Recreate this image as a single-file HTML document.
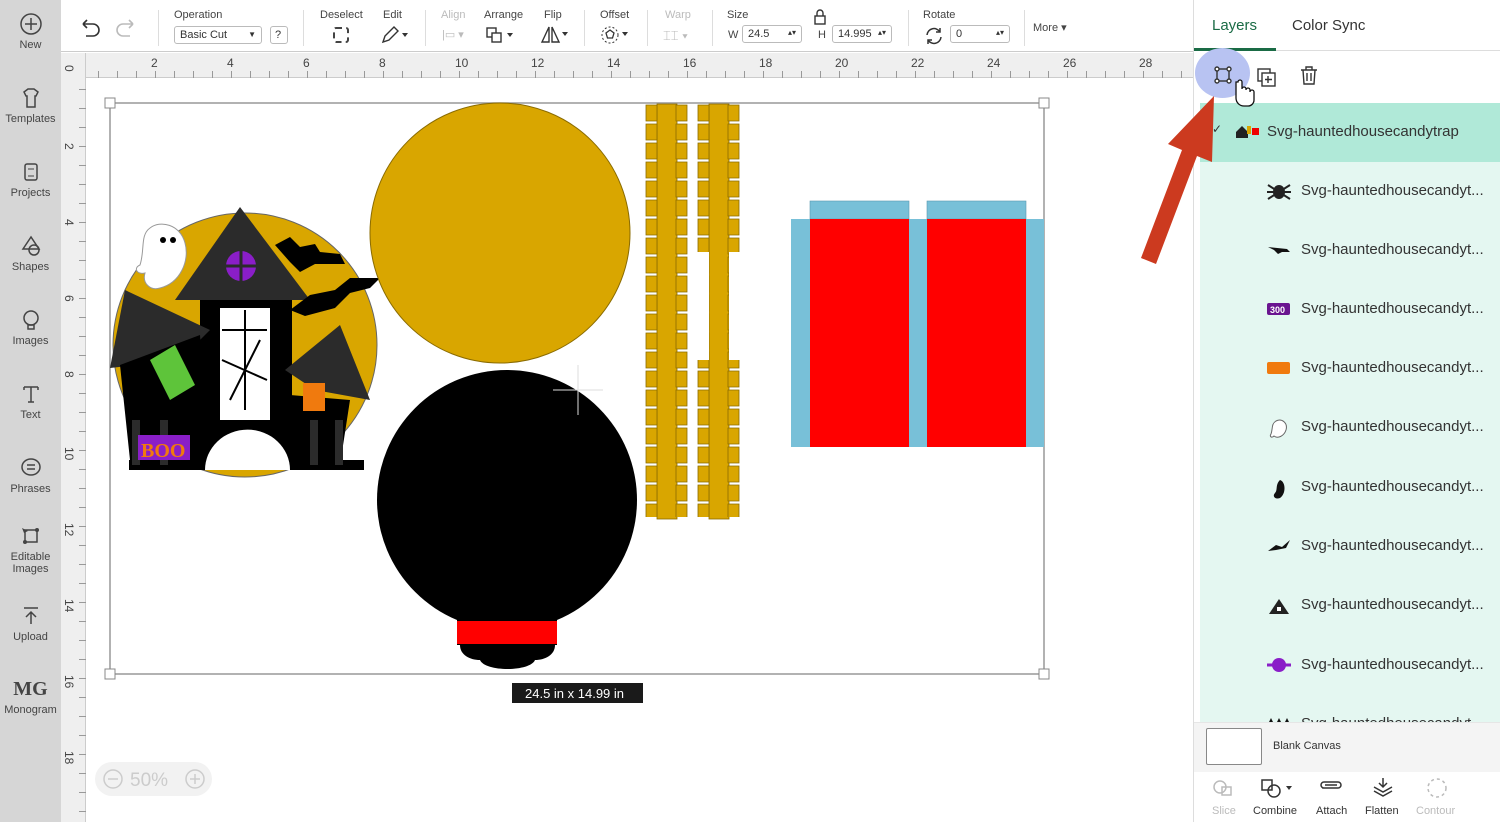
<!DOCTYPE html>
<html><head><meta charset="utf-8"><style>
*{margin:0;padding:0;box-sizing:border-box}
body{width:1500px;height:822px;overflow:hidden;background:#fff;font-family:"Liberation Sans",sans-serif;position:relative;color:#333}
.a{position:absolute}
.side{left:0;top:0;width:61px;height:822px;background:#d6d6d6}
.si{position:absolute;left:0;width:61px;text-align:center;font-size:11px;color:#444}
.tb{left:61px;top:0;width:1132px;height:52px;background:#fff;border-bottom:1px solid #ccc}
.lbl{position:absolute;font-size:11px;color:#444}
.dim{color:#bbb}
.inp{position:absolute;border:1px solid #bbb;border-radius:3px;height:18px;font-size:11px;padding:2px 5px;background:#fff}
.vs{position:absolute;left:1193px;top:0;width:1px;height:822px;background:#ddd}
.row{position:absolute;left:1200px;width:300px;height:59px;font-size:15px;color:#333}
.row span{position:absolute;left:101px;top:20px}
.ic{position:absolute;left:66px;top:20px;width:26px;height:18px}
.bt{position:absolute;top:805px;font-size:11px;color:#333;text-align:center}
</style></head><body>
<div class="a side"></div>
<div class="si" style="top:12px"><svg width="24" height="24"><circle cx="12" cy="12" r="10" fill="none" stroke="#444" stroke-width="1.5"/><path d="M12 6v12M6 12h12" stroke="#444" stroke-width="1.5"/></svg><div>New</div></div>
<div class="si" style="top:86px"><svg width="24" height="24"><path d="M5 6l4-3h6l4 3-2 4h-1v11H8V10H7z" fill="none" stroke="#444" stroke-width="1.5"/></svg><div>Templates</div></div>
<div class="si" style="top:160px"><svg width="24" height="24"><rect x="6" y="4" width="12" height="16" rx="2" fill="none" stroke="#444" stroke-width="1.5"/><path d="M9 9h6M9 16h6" stroke="#444"/></svg><div>Projects</div></div>
<div class="si" style="top:234px"><svg width="24" height="24"><path d="M12 3L4 15h16z" fill="none" stroke="#444" stroke-width="1.5"/><circle cx="15" cy="16" r="5" fill="none" stroke="#444" stroke-width="1.5"/></svg><div>Shapes</div></div>
<div class="si" style="top:308px"><svg width="24" height="24"><circle cx="12" cy="10" r="7" fill="none" stroke="#444" stroke-width="1.5"/><path d="M9 17h6v4H9z" fill="none" stroke="#444" stroke-width="1.5"/></svg><div>Images</div></div>
<div class="si" style="top:382px"><svg width="24" height="24"><path d="M5 5h14M12 5v15M9 20h6M5 5v3M19 5v3" stroke="#444" stroke-width="1.5" fill="none"/></svg><div>Text</div></div>
<div class="si" style="top:456px"><svg width="24" height="24"><ellipse cx="12" cy="11" rx="9" ry="8" fill="none" stroke="#444" stroke-width="1.5"/><path d="M8 9h8M8 13h8" stroke="#444" stroke-width="1.5"/></svg><div>Phrases</div></div>
<div class="si" style="top:524px"><svg width="24" height="24"><path d="M6 6h12v12H6z" fill="none" stroke="#444" stroke-width="1.5"/><circle cx="6" cy="18" r="2" fill="#444"/><circle cx="18" cy="6" r="2" fill="#444"/><path d="M3 4l6 3-4 2z" fill="#444"/></svg><div>Editable<br>Images</div></div>
<div class="si" style="top:604px"><svg width="24" height="24"><path d="M5 4h14M12 20V8M7 13l5-5 5 5" stroke="#444" stroke-width="1.5" fill="none"/></svg><div>Upload</div></div>
<div class="si" style="top:678px"><div style="font-size:20px;font-weight:bold;color:#444;font-family:'Liberation Serif',serif;height:26px">MG</div><div>Monogram</div></div>

<div class="a tb"></div>
<svg class="a" style="left:78px;top:16px" width="60" height="24"><path d="M5 8h10a6 6 0 0 1 0 12H8M5 8l4-4M5 8l4 4" stroke="#333" stroke-width="1.6" fill="none"/><path d="M55 8H45a6 6 0 0 0 0 12h7M55 8l-4-4M55 8l-4 4" stroke="#bbb" stroke-width="1.6" fill="none"/></svg>
<div class="a" style="left:158px;top:10px;width:1px;height:36px;background:#ddd"></div>
<div class="lbl" style="left:174px;top:9px">Operation</div>
<div class="inp" style="left:174px;top:26px;width:88px">Basic Cut<span style="float:right;font-size:8px;margin-top:1px">▼</span></div>
<div class="inp" style="left:270px;top:26px;width:18px;padding:2px 4px">?</div>
<div class="a" style="left:303px;top:10px;width:1px;height:36px;background:#ddd"></div>
<div class="lbl" style="left:320px;top:9px">Deselect</div>
<div class="a" style="left:333px;top:27px;width:16px;height:16px;border:2px dashed #444;border-radius:3px"></div>
<div class="lbl" style="left:383px;top:9px">Edit</div>
<svg class="a" style="left:380px;top:26px" width="30" height="18"><path d="M3 16l2-6 9-9 4 4-9 9z" fill="none" stroke="#333" stroke-width="1.4"/><path d="M22 7h6l-3 4z" fill="#333"/></svg>
<div class="a" style="left:425px;top:10px;width:1px;height:36px;background:#ddd"></div>
<div class="lbl dim" style="left:441px;top:9px">Align</div>
<div class="lbl dim" style="left:442px;top:28px">|▭ ▾</div>
<div class="lbl" style="left:484px;top:9px">Arrange</div>
<svg class="a" style="left:486px;top:26px" width="30" height="18"><rect x="1" y="2" width="9" height="9" fill="none" stroke="#333" stroke-width="1.4"/><rect x="6" y="7" width="9" height="9" fill="#fff" stroke="#333" stroke-width="1.4"/><path d="M21 7h6l-3 4z" fill="#333"/></svg>
<div class="lbl" style="left:544px;top:9px">Flip</div>
<svg class="a" style="left:540px;top:25px" width="30" height="20"><path d="M9 2L2 17h7zM12 2l7 15h-7z" fill="none" stroke="#333" stroke-width="1.4"/><path d="M22 7h6l-3 4z" fill="#333"/></svg>
<div class="a" style="left:584px;top:10px;width:1px;height:36px;background:#ddd"></div>
<div class="lbl" style="left:600px;top:9px">Offset</div>
<svg class="a" style="left:600px;top:25px" width="32" height="20"><circle cx="10" cy="10" r="8" fill="none" stroke="#333" stroke-dasharray="2 2"/><path d="M10 5l4 3-1.5 5h-5L6 8z" fill="none" stroke="#333" stroke-width="1.3"/><path d="M22 7h6l-3 4z" fill="#333"/></svg>
<div class="a" style="left:647px;top:10px;width:1px;height:36px;background:#ddd"></div>
<div class="lbl dim" style="left:665px;top:9px">Warp</div>
<div class="lbl dim" style="left:663px;top:28px;font-size:13px">⌶⌶ ▾</div>
<div class="a" style="left:712px;top:10px;width:1px;height:36px;background:#ddd"></div>
<div class="lbl" style="left:727px;top:9px">Size</div>
<div class="lbl" style="left:728px;top:29px">W</div>
<div class="inp" style="left:742px;top:25px;width:60px">24.5<span style="float:right;font-size:8px">▴▾</span></div>
<svg class="a" style="left:812px;top:9px" width="16" height="16"><rect x="3" y="7" width="10" height="8" fill="none" stroke="#333" stroke-width="1.4"/><path d="M5 7V4a3 3 0 0 1 6 0v3" fill="none" stroke="#333" stroke-width="1.4"/></svg>
<div class="lbl" style="left:818px;top:29px">H</div>
<div class="inp" style="left:832px;top:25px;width:60px">14.995<span style="float:right;font-size:8px">▴▾</span></div>
<div class="a" style="left:908px;top:10px;width:1px;height:36px;background:#ddd"></div>
<div class="lbl" style="left:923px;top:9px">Rotate</div>
<svg class="a" style="left:924px;top:26px" width="20" height="20"><path d="M3 9a7 7 0 0 1 13-3M17 11a7 7 0 0 1-13 3" fill="none" stroke="#333" stroke-width="1.5"/><path d="M16 2v4h-4M4 18v-4h4" fill="none" stroke="#333" stroke-width="1.5"/></svg>
<div class="inp" style="left:950px;top:25px;width:60px">0<span style="float:right;font-size:8px">▴▾</span></div>
<div class="a" style="left:1024px;top:10px;width:1px;height:36px;background:#ddd"></div>
<div class="lbl" style="left:1033px;top:21px">More ▾</div>

<div class="a" style="left:61px;top:53px;width:1132px;height:25px;background:#efefef;border-bottom:1px solid #ccc"></div>
<div class="a" style="left:61px;top:53px;width:25px;height:769px;background:#efefef;border-right:1px solid #ccc"></div>
<svg class="a" style="left:61px;top:53px" width="1132" height="769">
<defs><pattern id="hp" x="18" y="0" width="19" height="25" patternUnits="userSpaceOnUse"><path d="M0.5 18v7" stroke="#999"/></pattern>
<pattern id="vp" x="0" y="17" width="25" height="19" patternUnits="userSpaceOnUse"><path d="M18 0.5h7" stroke="#999"/></pattern></defs>
<rect x="25" y="0" width="1107" height="25" fill="url(#hp)"/>
<rect x="0" y="25" width="25" height="744" fill="url(#vp)"/>
<g font-size="12" fill="#444" font-family="Liberation Sans">
<text x="90" y="14">2</text><text x="166" y="14">4</text><text x="242" y="14">6</text><text x="318" y="14">8</text><text x="394" y="14">10</text><text x="470" y="14">12</text><text x="546" y="14">14</text><text x="622" y="14">16</text><text x="698" y="14">18</text><text x="774" y="14">20</text><text x="850" y="14">22</text><text x="926" y="14">24</text><text x="1002" y="14">26</text><text x="1078" y="14">28</text>
<g transform="rotate(90)"><text x="12" y="-4">0</text><text x="90" y="-4">2</text><text x="166" y="-4">4</text><text x="242" y="-4">6</text><text x="318" y="-4">8</text><text x="394" y="-4">10</text><text x="470" y="-4">12</text><text x="546" y="-4">14</text><text x="622" y="-4">16</text><text x="698" y="-4">18</text></g>
</g></svg>

<svg class="a" style="left:0;top:0" width="1193" height="822">
<defs><pattern id="tab" x="0" y="104" width="43" height="19" patternUnits="userSpaceOnUse"><path d="M1 1h11v16H1zM31 1h11v16H31z" fill="#d9a600" stroke="#8a6b00" stroke-width="0.8"/></pattern></defs>
<rect x="110" y="103" width="934" height="571" fill="none" stroke="#999" stroke-width="1.5"/>
<g fill="#fff" stroke="#888"><rect x="105" y="98" width="10" height="10"/><rect x="1039" y="98" width="10" height="10"/><rect x="105" y="669" width="10" height="10"/><rect x="1039" y="669" width="10" height="10"/></g>
<circle cx="245" cy="345" r="132" fill="#d9a600" stroke="#666"/>
<path d="M129 470h235v-10H129z" fill="#000"/>
<path d="M200 300h92v170h-92z" fill="#000"/>
<rect x="220" y="308" width="50" height="112" fill="#fff"/>
<path d="M222 330l45 0M222 360l45 20M245 310l0 100M230 400l30-60" stroke="#000" stroke-width="2"/>
<path d="M175 300L240 207 310 300z" fill="#2b2b2b"/>
<circle cx="241" cy="266" r="15" fill="#8a1ec8"/><path d="M241 251v30M226 266h30" stroke="#2b2b2b" stroke-width="3"/>
<path d="M125 290L210 330l-30 30-70 8z" fill="#2b2b2b"/>
<path d="M120 365l80-30 10 130-80-5z" fill="#000"/>
<path d="M150 360l25-15 20 40-25 15z" fill="#5ec43a"/>
<path d="M285 370l55-45 30 75-55-10z" fill="#2b2b2b"/>
<path d="M290 395l60 5-10 65-55 0z" fill="#000"/>
<rect x="303" y="383" width="22" height="28" fill="#f07a0e"/>
<path d="M205 470a40 38 0 0 1 85 0z" fill="#fff"/>
<path d="M150 228c10-8 30-4 35 15 5 18-5 40-25 45-10 3-18-5-15-15-8 2-12-5-5-8 5-15 0-30 10-37z" fill="#fff" stroke="#999"/>
<circle cx="163" cy="240" r="3" fill="#000"/><circle cx="173" cy="240" r="3" fill="#000"/>
<path d="M275 245l15-8 10 10 15-3 5 8 20 2 5 10-30 0-15 8-10-10z" fill="#000"/>
<path d="M290 310l20-15 25-5 15-12 30 0-10 10-20 5-15 15-30 8z" fill="#000"/>
<path d="M132 420h8v45h-8zM160 420h8v45h-8zM310 420h8v45h-8zM335 420h8v45h-8z" fill="#2b2b2b"/>
<rect x="138" y="435" width="52" height="25" fill="#8a1ec8"/><text x="141" y="457" font-size="20" fill="#f07a0e" font-family="Liberation Serif" font-weight="bold">BOO</text>
<circle cx="500" cy="233" r="130" fill="#d9a600" stroke="#8a6b00"/>
<rect x="657" y="104" width="20" height="415" fill="#d9a600" stroke="#8a6b00" stroke-width="0.8"/>
<rect x="645" y="104" width="43" height="413" fill="url(#tab)"/>
<g transform="translate(52,0)"><rect x="657" y="104" width="20" height="415" fill="#d9a600" stroke="#8a6b00" stroke-width="0.8"/>
<rect x="645" y="104" width="43" height="413" fill="url(#tab)"/></g>
<rect x="697" y="252" width="12" height="108" fill="#fff"/><rect x="729" y="252" width="12" height="108" fill="#fff"/>
<circle cx="507" cy="500" r="130" fill="#000"/>
<rect x="457" y="600" width="100" height="45" fill="#000"/>
<path d="M460 645h95c0 10-10 15-20 15-5 12-50 12-55 0-10 0-20-5-20-15z" fill="#000"/>
<rect x="457" y="621" width="100" height="23" fill="#ff0000"/>
<path d="M578 365v50M553 390h50" stroke="#ddd"/>
<rect x="791" y="219" width="253" height="228" fill="#78c0d8"/>
<rect x="810" y="201" width="99" height="18" fill="#78c0d8" stroke="#5a9ab0" stroke-width="0.6"/>
<rect x="927" y="201" width="99" height="18" fill="#78c0d8" stroke="#5a9ab0" stroke-width="0.6"/>
<rect x="810" y="219" width="99" height="228" fill="#ff0000"/>
<rect x="927" y="219" width="99" height="228" fill="#ff0000"/>
<rect x="512" y="683" width="131" height="20" fill="#1a1a1a"/>
<text x="525" y="698" font-size="13" fill="#fff" font-family="Liberation Sans">24.5  in x 14.99  in</text>
<rect x="95" y="762" width="117" height="34" rx="17" fill="#f2f2f2"/>
<circle cx="113" cy="779" r="9" fill="none" stroke="#ccc" stroke-width="1.5"/><path d="M108 779h10" stroke="#ccc" stroke-width="1.5"/>
<text x="130" y="786" font-size="19" fill="#ccc" font-family="Liberation Sans">50%</text>
<circle cx="195" cy="779" r="9" fill="none" stroke="#ccc" stroke-width="1.5"/><path d="M190 779h10M195 774v10" stroke="#ccc" stroke-width="1.5"/>
</svg>

<div class="vs"></div>
<div class="a" style="left:1212px;top:17px;font-size:15px;color:#1a6b45">Layers</div>
<div class="a" style="left:1292px;top:17px;font-size:15px;color:#333">Color Sync</div>
<div class="a" style="left:1194px;top:48px;width:82px;height:3px;background:#1a6b45"></div>
<div class="a" style="left:1276px;top:50px;width:224px;height:1px;background:#ddd"></div>
<div class="a" style="left:1200px;top:103px;width:300px;height:620px;background:#e4f7f1"></div>
<div class="a" style="left:1200px;top:103px;width:300px;height:59px;background:#b0e9d8"></div>
<div class="row" style="top:103px"><span style="left:12px;top:19px;font-size:12px">✓</span><div class="ic" style="left:34px;top:19px"><svg width="26" height="18"><path d="M2 10l6-6 6 6v6H2z" fill="#222"/><rect x="13" y="4" width="4" height="8" fill="#d9a600"/><rect x="18" y="6" width="7" height="7" fill="#e00"/></svg></div><span style="left:67px">Svg-hauntedhousecandytrap</span></div>
<div class="row" style="top:162px"><div class="ic"><svg width="26" height="20"><ellipse cx="13" cy="10" rx="6" ry="7" fill="#222"/><path d="M2 3l22 14M2 17L24 3M1 10h24" stroke="#222" stroke-width="2"/></svg></div><span>Svg-hauntedhousecandyt...</span></div>
<div class="row" style="top:221px"><div class="ic"><svg width="26" height="18"><path d="M2 6l6 3 4 4 4-2 8 0-3-3z" fill="#111"/></svg></div><span>Svg-hauntedhousecandyt...</span></div>
<div class="row" style="top:280px"><div class="ic"><svg width="26" height="18"><rect x="1" y="3" width="23" height="12" rx="2" fill="#6a1590"/><text x="4" y="13" font-size="9" fill="#fff" font-weight="bold">300</text></svg></div><span>Svg-hauntedhousecandyt...</span></div>
<div class="row" style="top:339px"><div class="ic"><svg width="26" height="18"><rect x="1" y="3" width="23" height="12" rx="2" fill="#f07a0e"/></svg></div><span>Svg-hauntedhousecandyt...</span></div>
<div class="row" style="top:398px"><div class="ic"><svg width="26" height="22"><path d="M10 3c6-3 12 2 10 9-2 6-8 9-12 6-2 2-5 1-3-2 2-5 0-10 5-13z" fill="#fff" stroke="#666"/></svg></div><span>Svg-hauntedhousecandyt...</span></div>
<div class="row" style="top:458px"><div class="ic"><svg width="26" height="22"><path d="M14 2c6 2 6 14 0 18-5 2-8-2-5-5 3-3 0-8 5-13z" fill="#111"/></svg></div><span>Svg-hauntedhousecandyt...</span></div>
<div class="row" style="top:517px"><div class="ic"><svg width="26" height="18"><path d="M2 14l8-6 6 2 8-7-4 8-10 2z" fill="#111"/></svg></div><span>Svg-hauntedhousecandyt...</span></div>
<div class="row" style="top:576px"><div class="ic"><svg width="26" height="20"><path d="M13 3L3 18h20z" fill="#222"/><rect x="11" y="11" width="4" height="4" fill="#fff"/></svg></div><span>Svg-hauntedhousecandyt...</span></div>
<div class="row" style="top:636px"><div class="ic"><svg width="26" height="18"><circle cx="13" cy="9" r="7" fill="#8a1ec8"/><path d="M1 9h24" stroke="#8a1ec8" stroke-width="3"/></svg></div><span>Svg-hauntedhousecandyt...</span></div>
<div class="row" style="top:695px;height:28px;overflow:hidden"><div class="ic" style="top:18px"><svg width="26" height="10"><path d="M2 8l3-6 3 6zM10 8l3-6 3 6zM18 8l3-6 3 6z" fill="#111"/></svg></div><span style="top:20px">Svg-hauntedhousecandyt...</span></div>
<div class="a" style="left:1195px;top:48px;width:55px;height:50px;border-radius:50%;background:#b8c3f2"></div>
<svg class="a" style="left:1212px;top:64px" width="110" height="50"><g fill="none" stroke="#333" stroke-width="1.4"><rect x="5" y="5" width="12" height="12"/><circle cx="5" cy="5" r="2" fill="#fff"/><circle cx="17" cy="5" r="2" fill="#fff"/><circle cx="5" cy="17" r="2" fill="#fff"/><circle cx="17" cy="17" r="2" fill="#fff"/>
<rect x="46" y="5" width="12" height="12"/><rect x="50" y="9" width="13" height="13" fill="#fff"/><path d="M56 12v7M53 15.5h7"/>
<path d="M89 6h16M94 6V3h6v3M91 6l1 14h10l1-14M95 9v8M99 9v8"/></g>
<path d="M24 18v16a8 8 0 0 0 8 8h4a6 6 0 0 0 6-6v-8a2 2 0 0 0-4 0v-2a2 2 0 0 0-4 0v-1a2 2 0 0 0-4 0v-7a2 2 0 0 0-4 0z" fill="#fff" stroke="#111" stroke-width="1.3"/></svg>
<svg class="a" style="left:0;top:0;pointer-events:none" width="1500" height="822"><path d="M1141 258L1182 150 1168 144 1214 96 1212 162 1197 156 1156 264z" fill="#cc3a1f"/></svg>
<div class="a" style="left:1194px;top:722px;width:306px;height:50px;background:#f4f4f4;border-top:1px solid #e6e6e6"></div>
<div class="a" style="left:1206px;top:728px;width:56px;height:37px;background:#fff;border:1px solid #888;border-radius:2px"></div>
<div class="a" style="left:1273px;top:740px;font-size:11px;color:#333">Blank Canvas</div>
<svg class="a" style="left:1200px;top:775px" width="300" height="30"><g fill="none" stroke-width="1.5">
<circle cx="20" cy="12" r="6" stroke="#bbb"/><rect x="22" y="12" width="9" height="8" stroke="#bbb"/>
<rect x="62" y="5" width="10" height="10" stroke="#333"/><circle cx="74" cy="16" r="6" stroke="#333"/>
<path d="M122 13h16a3 3 0 0 0 0-6h-14a3 3 0 0 0 0 6M125 10h12" stroke="#333"/>
<path d="M183 3v9M179 8l4 4 4-4M174 12l9 5 9-5M174 16l9 5 9-5" stroke="#333"/>
<circle cx="237" cy="13" r="9" stroke="#bbb" stroke-dasharray="3 3"/></g>
<path d="M86 11h6l-3 4z" fill="#333"/></svg>
<div class="bt" style="left:1212px;color:#bbb">Slice</div>
<div class="bt" style="left:1253px">Combine</div>
<div class="bt" style="left:1316px">Attach</div>
<div class="bt" style="left:1365px">Flatten</div>
<div class="bt" style="left:1416px;color:#bbb">Contour</div>
</body></html>
